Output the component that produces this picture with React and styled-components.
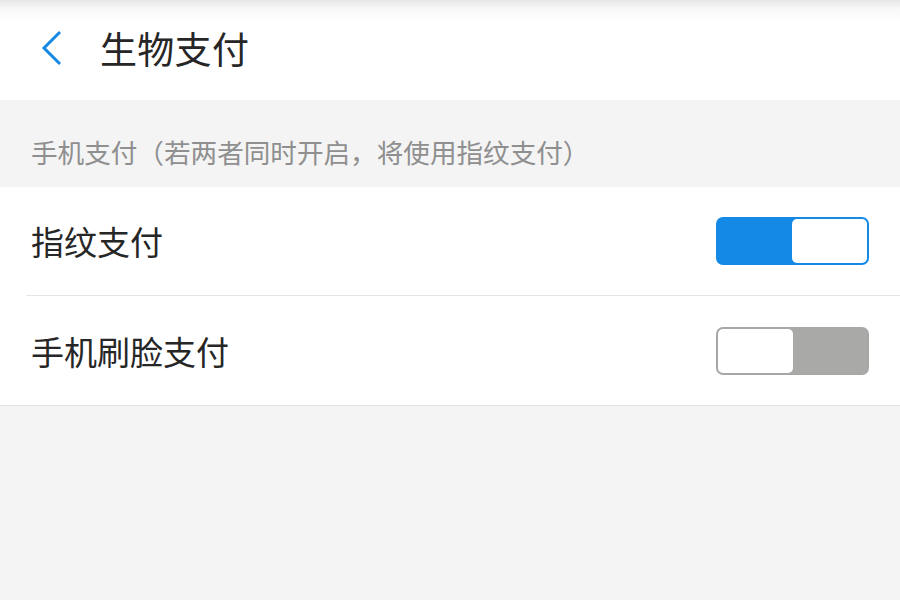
import React, { useState } from 'react';
import styled, { createGlobalStyle } from 'styled-components';

const GlobalStyle = createGlobalStyle`
  html, body {
    margin: 0;
    padding: 0;
    background: #f4f4f4;
    font-family: "Noto Sans CJK SC", "Noto Sans", sans-serif;
  }
`;

const Page = styled.div`
  width: 900px;
  height: 600px;
  background: #f4f4f4;
  overflow: hidden;
`;

const Header = styled.header`
  height: 100px;
  display: flex;
  align-items: center;
  background: linear-gradient(to bottom, #e6e6e6 0px, #f7f7f7 8px, #ffffff 22px);
  box-sizing: border-box;
  padding: 0 0 4px 38px;
`;

const BackButton = styled.button`
  width: 28px;
  height: 40px;
  padding: 0;
  border: none;
  background: none;
  display: flex;
  align-items: center;
  justify-content: center;
  cursor: pointer;
`;

const Title = styled.h1`
  margin: 0 0 0 34px;
  font-size: 37px;
  font-weight: 400;
  color: #262626;
  letter-spacing: 0.3px;
`;

const SectionLabel = styled.div`
  height: 87px;
  box-sizing: border-box;
  padding: 36px 0 0 31px;
  font-size: 26.6px;
  line-height: 32px;
  color: #8f8f8f;
`;

const List = styled.div`
  background: #fff;
  border-bottom: 1px solid #e3e3e3;
`;

const Row = styled.div`
  height: 109px;
  display: flex;
  align-items: center;
  justify-content: space-between;
  margin-left: 26px;
  padding: 0 31px 0 5px;
  box-sizing: border-box;
  border-bottom: ${p => (p.$last ? 'none' : '1px solid #e6e6e6')};
`;

const Label = styled.span`
  font-size: 33px;
  color: #262626;
`;

const Toggle = styled.button`
  width: 153px;
  height: 48px;
  padding: 0;
  border-radius: 7px;
  border: 2px solid ${p => (p.$on ? '#1489e6' : '#a7a8a6')};
  background: ${p => (p.$on ? '#1489e6' : '#a9aaa8')};
  box-sizing: border-box;
  display: flex;
  justify-content: ${p => (p.$on ? 'flex-end' : 'flex-start')};
  cursor: pointer;
`;

const Knob = styled.span`
  width: 75px;
  height: 100%;
  background: #fff;
  border-radius: 5px;
`;

const ChevronLeft = () => (
  <svg width="24" height="36" viewBox="0 0 24 36">
    <path d="M20 2 L4 18 L20 34" fill="none" stroke="#1687e2" strokeWidth="3" />
  </svg>
);

export default function App() {
  const [finger, setFinger] = useState(true);
  const [face, setFace] = useState(false);
  return (
    <Page>
      <GlobalStyle />
      <Header>
        <BackButton aria-label="返回">
          <ChevronLeft />
        </BackButton>
        <Title>生物支付</Title>
      </Header>
      <SectionLabel>手机支付（若两者同时开启，将使用指纹支付）</SectionLabel>
      <List>
        <Row>
          <Label>指纹支付</Label>
          <Toggle $on={finger} onClick={() => setFinger(!finger)}>
            <Knob />
          </Toggle>
        </Row>
        <Row $last>
          <Label>手机刷脸支付</Label>
          <Toggle $on={face} onClick={() => setFace(!face)}>
            <Knob />
          </Toggle>
        </Row>
      </List>
    </Page>
  );
}
